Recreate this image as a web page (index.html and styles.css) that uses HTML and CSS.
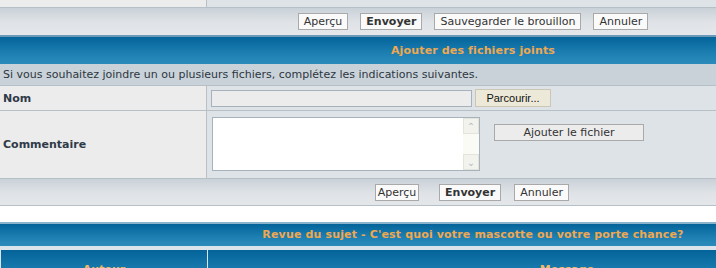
FILE: index.html
```html
<!DOCTYPE html>
<html lang="fr">
<head>
  <meta charset="UTF-8">
  <title>Poster un message</title>
  <link rel="stylesheet" href="styles.css">
</head>
<body>
  <div class="page">
    <div class="forumline">
      <div class="split stub">
        <div class="row1"></div>
        <div class="row2"></div>
      </div>
      <div class="cat-bottom">
        <button class="liteoption">Aperçu</button>
        <button class="mainoption">Envoyer</button>
        <button class="liteoption">Sauvegarder le brouillon</button>
        <button class="liteoption">Annuler</button>
      </div>
      <div class="thhead">Ajouter des fichiers joints</div>
      <div class="info">Si vous souhaitez joindre un ou plusieurs fichiers, complétez les indications suivantes.</div>
      <div class="split row-nom">
        <div class="row1 label">Nom</div>
        <div class="row2 field">
          <span class="filebox"></span>
          <button class="browse">Parcourir...</button>
        </div>
      </div>
      <div class="split row-comment">
        <div class="row1 label">Commentaire</div>
        <div class="row2 field">
          <div class="textarea">
            <div class="scroll">
              <span class="arrow">&#8963;</span>
              <span class="arrow">&#8964;</span>
            </div>
          </div>
          <button class="addfile">Ajouter le fichier</button>
        </div>
      </div>
      <div class="cat-bottom second">
        <button class="liteoption preview">Aperçu</button>
        <button class="mainoption">Envoyer</button>
        <button class="liteoption">Annuler</button>
      </div>
    </div>

    <div class="forumline review">
      <div class="thhead">Revue du sujet - C'est quoi votre mascotte ou votre porte chance?</div>
      <div class="split colheads">
        <div class="thcol">Auteur</div>
        <div class="thcol msg">Message</div>
      </div>
    </div>
  </div>
</body>
</html>
```

FILE: styles.css
```css
body {
  margin: 0;
  background: #fff;
  font-family: "DejaVu Sans", Verdana, sans-serif;
  font-size: 11px;
  color: #333;
  overflow: hidden;
}
.page {
  width: 946px;
}
.split {
  display: grid;
  grid-template-columns: 206px 1fr;
  column-gap: 1px;
  background: #b7c0c7;
  border-bottom: 1px solid #b7c0c7;
}
.row1 {
  background: #ececec;
}
.row2 {
  background: #dee3e7;
}
.stub {
  height: 7px;
}
.cat-bottom {
  height: 26px;
  display: flex;
  align-items: center;
  justify-content: center;
  gap: 12px;
  background: linear-gradient(#c9d1d8, #dfe3e7 55%, #e4e7ea);
  border-bottom: 1px solid #e2e8ed;
}
.cat-bottom button {
  font-family: "DejaVu Sans", Verdana, sans-serif;
  font-size: 11px;
  color: #333;
  background: #fafafa;
  border: 1px solid #a9a9a9;
  height: 17px;
  padding: 0 5px;
  margin: 0;
  line-height: 15px;
}
.cat-bottom .mainoption {
  font-weight: bold;
}
.thhead {
  height: 27px;
  line-height: 27px;
  text-align: center;
  font-weight: bold;
  letter-spacing: 0.15px;
  color: #f0a850;
  background: linear-gradient(#04649a, #1d7fb2 60%, #2b8bbb);
  border-top: 2px solid #6d98b6;
}
.info {
  height: 21px;
  line-height: 21px;
  padding-left: 3px;
  background: #c9d2d9;
  color: #2d3640;
  border-bottom: 1px solid #b7c0c7;
}
.label {
  font-weight: bold;
  color: #2f3a48;
  padding-left: 3px;
  display: flex;
  align-items: center;
  font-size: 11px;
}
.field {
  display: flex;
  align-items: center;
  padding-left: 4px;
}
.row-nom {
  height: 24px;
}
.filebox {
  width: 259px;
  height: 15px;
  background: #ececec;
  border: 1px solid #a8b2bb;
}
.browse {
  margin-left: 3px;
  width: 76px;
  height: 18px;
  padding: 0;
  background: #ece9d8;
  border: 1px solid #cbc7b4;
  font-family: "Liberation Sans", Arial, sans-serif;
  font-size: 11px;
  color: #111;
}
.row-comment {
  height: 67px;
}
.row-comment .field {
  align-items: flex-start;
  padding-top: 6px;
  padding-left: 5px;
}
.textarea {
  width: 266px;
  height: 52px;
  background: #fff;
  border: 1px solid #a8b2bb;
  display: flex;
  justify-content: flex-end;
}
.scroll {
  width: 16px;
  display: flex;
  flex-direction: column;
  justify-content: space-between;
  background: #fbfbf6;
}
.arrow {
  height: 16px;
  line-height: 16px;
  text-align: center;
  color: #b8bcc4;
  background: #f3f3ee;
  border: 1px solid #e4e4dc;
  box-sizing: border-box;
  font-size: 10px;
}
.addfile {
  margin: 7px 0 0 14px;
  width: 150px;
  height: 17px;
  padding: 0;
  background: #ececec;
  border: 1px solid #a9a9a9;
  font-family: "DejaVu Sans", Verdana, sans-serif;
  font-size: 11px;
  color: #333;
}
.second {
  gap: 13px;
  padding-right: 2px;
  border-bottom: 1px solid #b7c0c7;
}
.second .preview {
  width: 44px;
  padding: 0;
  margin-right: 7px;
}
.review {
  margin-top: 16px;
}
.review .thhead {
  height: 22px;
  line-height: 22px;
  border-top: 2px solid #8cb3cc;
  border-bottom: 4px solid #dbe4ea;
}
.colheads {
  background: #dbe4ea;
  border-bottom: none;
  padding-left: 1px;
}
.thcol {
  height: 24px;
  line-height: 40px;
  text-align: center;
  font-weight: bold;
  color: #f0b868;
  background: linear-gradient(#04649a, #1d7fb2);
}
.msg {
  padding-right: 20px;
}
```
